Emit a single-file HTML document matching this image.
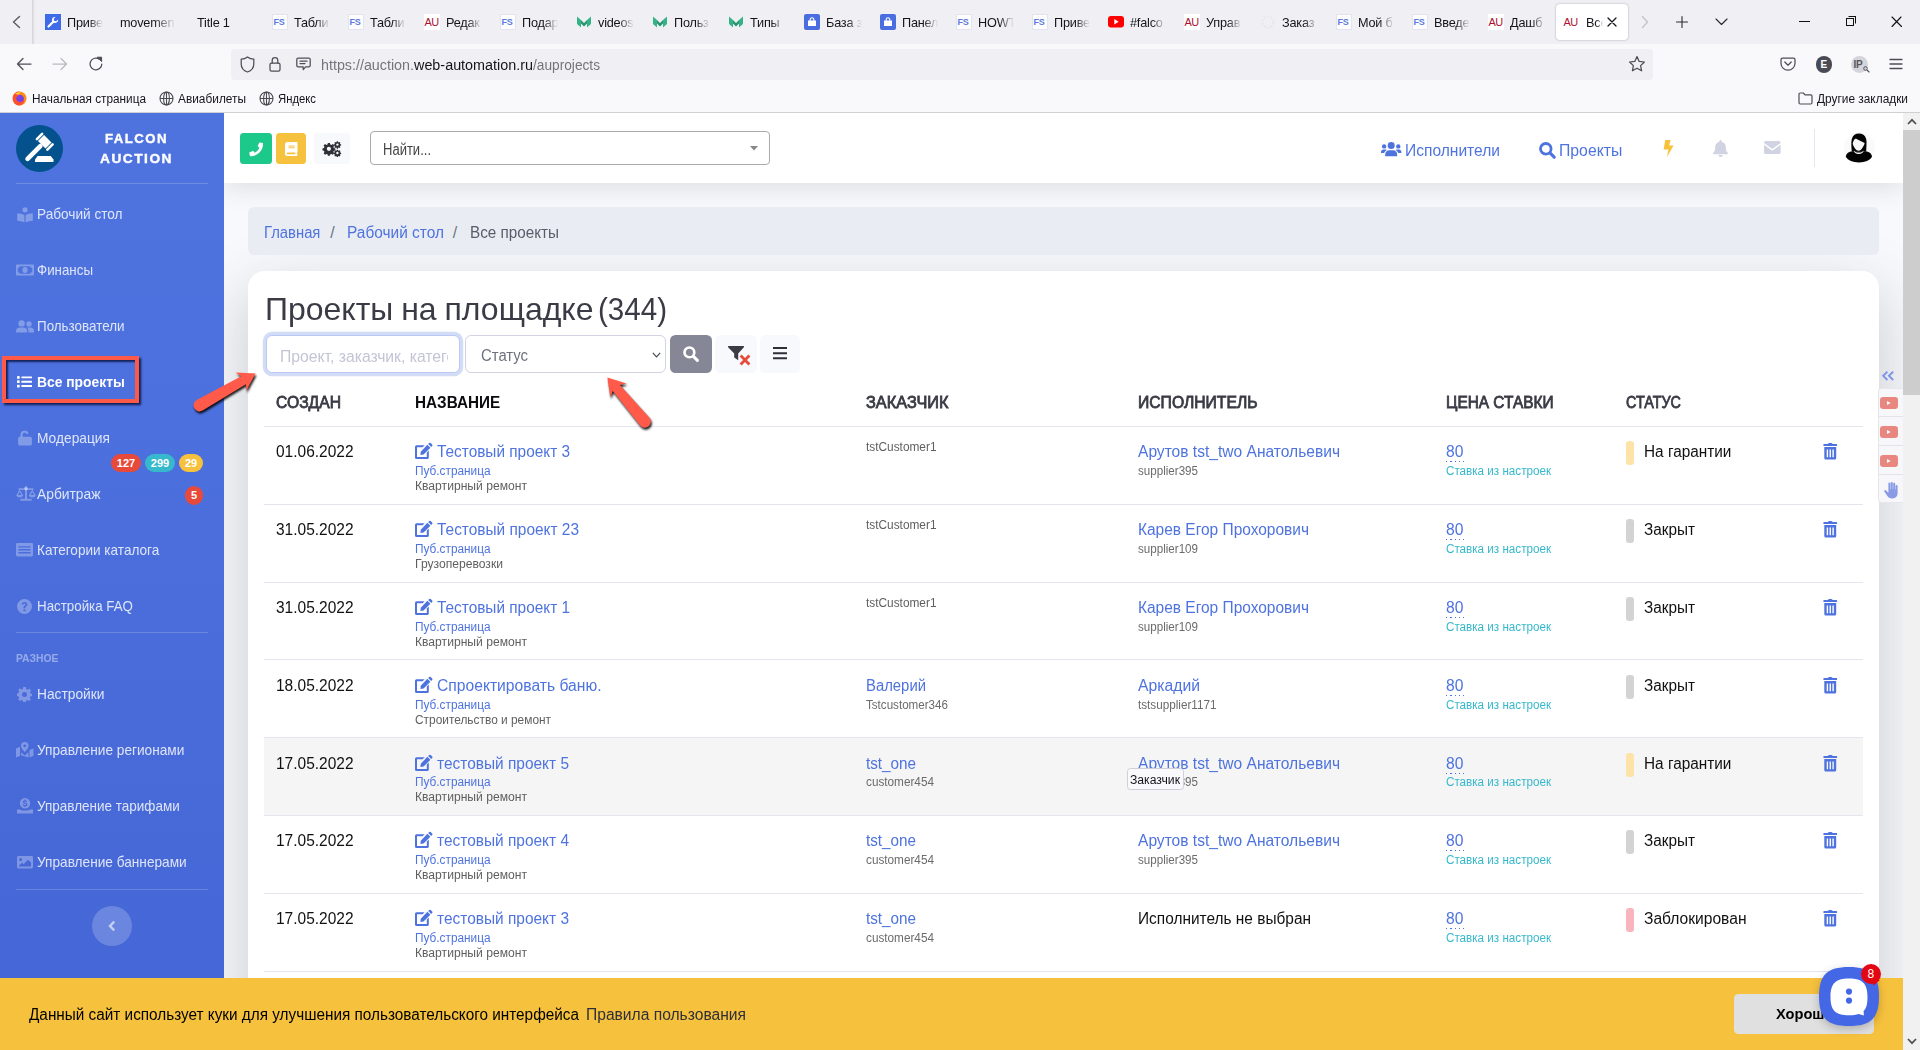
<!DOCTYPE html>
<html lang="ru"><head><meta charset="utf-8"><title>Все проекты</title>
<style>
html,body{margin:0;padding:0}
body{width:1920px;height:1050px;overflow:hidden;position:relative;background:#f8f9fc;font-family:"Liberation Sans",sans-serif;}
.t{position:absolute;white-space:nowrap;transform-origin:0 50%;}
.sb{-webkit-text-stroke:.8px currentColor}
.b{position:absolute;box-sizing:border-box;}
svg{position:absolute;overflow:visible}
.fade{-webkit-mask-image:linear-gradient(to right,#000 60%,transparent 100%);mask-image:linear-gradient(to right,#000 60%,transparent 100%);overflow:hidden}
</style></head><body>
<div class="b" style="left:224px;top:113px;width:1679px;height:937px;background:#f8f9fc;"></div>
<div class="b" style="left:224px;top:183px;width:1679px;height:867px;overflow:hidden;"><div class="b" style="left:0;top:-70px;width:1679px;height:70px;box-shadow:0 2.4px 28px 0 rgba(58,59,69,.16);"></div><div class="b" style="left:24px;top:88px;width:1631px;height:900px;border-radius:17px;box-shadow:0 22px 60px 4px rgba(58,59,69,.22);"></div></div>
<div class="b" style="left:248px;top:207px;width:1631px;height:48px;background:#eaecf4;border-radius:6px;"></div>
<span id="t1" class="t " style="left:264.3px;top:221.9px;font-size:16px;line-height:21px;color:#4e73df;transform:scaleX(0.9260);">Главная</span>
<span id="t2" class="t " style="left:330.2px;top:221.9px;font-size:16px;line-height:21px;color:#6c757d;">/</span>
<span id="t3" class="t " style="left:347.2px;top:221.9px;font-size:16px;line-height:21px;color:#4e73df;transform:scaleX(0.9658);">Рабочий стол</span>
<span id="t4" class="t " style="left:452.8px;top:221.9px;font-size:16px;line-height:21px;color:#6c757d;">/</span>
<span id="t5" class="t " style="left:470px;top:221.9px;font-size:16px;line-height:21px;color:#5a5c69;transform:scaleX(0.9530);">Все проекты</span>
<div class="b" style="left:248px;top:271px;width:1631px;height:800px;background:#fff;border-radius:17px;"></div>
<span id="t6" class="t " style="left:264.5px;top:288px;font-size:32px;line-height:42px;color:#3a3b45;transform:scaleX(0.9992);word-spacing:-1px;">Проекты на площадке</span>
<span id="t7" class="t " style="left:598px;top:288px;font-size:32px;line-height:42px;color:#3a3b45;transform:scaleX(0.9237);">(344)</span>
<div class="b" style="left:266px;top:334.8px;width:193.5px;height:37.8px;background:#fff;border:1px solid #bac8f3;border-radius:6px;box-shadow:0 0 0 3.2px rgba(78,115,223,.25);"></div>
<span class="t" style="left:279.6px;top:345.8px;width:168.4px;overflow:hidden;font-size:16px;line-height:21px;color:#c3c5d6;transform:none"><span id="ph" style="display:inline-block;transform-origin:0 50%;transform:scaleX(0.982)">Проект, заказчик, категория</span></span>
<div class="b" style="left:464.5px;top:334.8px;width:201px;height:37.8px;background:#fff;border:1px solid #d1d3e2;border-radius:6px;"></div>
<span id="t8" class="t " style="left:481.3px;top:344.9px;font-size:16px;line-height:21px;color:#6e707e;transform:scaleX(0.9293);">Статус</span>
<svg style="left:651.6px;top:351.6px;" width="9" height="6" viewBox="0 0 9 6"><path d="M0.8 0.8 L4.5 4.8 L8.2 0.8" fill="none" stroke="#4a4b57" stroke-width="1.25"/></svg>
<div class="b" style="left:670px;top:334.9px;width:42px;height:37.8px;background:#858796;border-radius:5.5px;"></div>
<svg style="left:683px;top:345.6px;" width="16" height="16" viewBox="0 0 16 16"><circle cx="6.4" cy="6.4" r="4.9" fill="none" stroke="#fff" stroke-width="2.6"/><path d="M10.4 10.4 L14.4 14.4" stroke="#fff" stroke-width="3" stroke-linecap="round"/></svg>
<div class="b" style="left:715px;top:334.9px;width:42px;height:37.8px;background:#f8f9fc;border-radius:5.5px;"></div>
<svg style="left:727.5px;top:345.6px;" width="24" height="20" viewBox="0 0 24 20"><path d="M0.6 0 H15.4 A0.7 0.7 0 0 1 15.9 1.2 L10.2 7.6 V14.2 L6.2 11.4 V7.6 L0.1 1.2 A0.7 0.7 0 0 1 0.6 0 Z" fill="#3a3b45"/><path d="M12.6 9.6 L21.4 18.4 M21.4 9.6 L12.6 18.4" stroke="#e74a3b" stroke-width="2.8"/></svg>
<div class="b" style="left:760px;top:334.9px;width:40px;height:37.8px;background:#f8f9fc;border-radius:5.5px;"></div>
<svg style="left:773px;top:347.3px;" width="14" height="12.4" viewBox="0 0 14 12.4"><path d="M0 1.1 H14 M0 6.2 H14 M0 11.3 H14" stroke="#2e2f37" stroke-width="2"/></svg>
<span id="t9" class="t sb" style="left:276px;top:392.1px;font-size:16px;line-height:21px;color:#3a3b45;transform:scaleX(0.9793);">СОЗДАН</span>
<span id="t10" class="t " style="left:415.2px;top:392.1px;font-size:16px;line-height:21px;color:#0c0c10;font-weight:700;transform:scaleX(0.9555);">НАЗВАНИЕ</span>
<span id="t11" class="t sb" style="left:866px;top:392.1px;font-size:16px;line-height:21px;color:#3a3b45;transform:scaleX(1.0191);">ЗАКАЗЧИК</span>
<span id="t12" class="t sb" style="left:1138px;top:392.1px;font-size:16px;line-height:21px;color:#3a3b45;transform:scaleX(0.9809);">ИСПОЛНИТЕЛЬ</span>
<span id="t13" class="t sb" style="left:1446.3px;top:392.1px;font-size:16px;line-height:21px;color:#3a3b45;transform:scaleX(0.9632);">ЦЕНА СТАВКИ</span>
<span id="t14" class="t sb" style="left:1626px;top:392.1px;font-size:16px;line-height:21px;color:#3a3b45;transform:scaleX(0.8989);">СТАТУС</span>
<div class="b" style="left:264px;top:425.6px;width:1599px;height:1.6px;background:#e3e6f0;"></div>
<div class="b" style="left:264px;top:504px;width:1599px;height:1px;background:#e3e6f0;"></div>
<span id="t15" class="t " style="left:276px;top:441px;font-size:16px;line-height:21px;color:#111;transform:scaleX(0.9678);">01.06.2022</span>
<svg style="left:415px;top:443.1px;" width="18" height="16" viewBox="0 0 18 16"><g fill="#4e73df"><path fill-rule="evenodd" d="M1.6 2.2 H9.6 L7.6 4.2 H2 V14 H11.8 V9.6 L13.8 7.6 V14.4 A1.6 1.6 0 0 1 12.2 16 H1.6 A1.6 1.6 0 0 1 0 14.4 V3.8 A1.6 1.6 0 0 1 1.6 2.2 Z"/><path d="M12.4 1.8 L15.4 4.8 L8.6 11.6 L5.4 12 L5.8 8.8 Z"/><path d="M13.2 1 L14.2 0 A1 1 0 0 1 15.6 0 L17.2 1.6 A1 1 0 0 1 17.2 3 L16.2 4 Z"/></g></svg>
<span id="t16" class="t " style="left:437px;top:441px;font-size:16px;line-height:21px;color:#4e73df;transform:scaleX(0.9608);">Тестовый проект 3</span>
<span id="t17" class="t " style="left:415.3px;top:462.9px;font-size:12px;line-height:16px;color:#4e73df;transform:scaleX(0.9845);">Пуб.страница</span>
<span id="t18" class="t " style="left:415.3px;top:478.3px;font-size:12px;line-height:16px;color:#5f5f5f;transform:scaleX(1.0101);">Квартирный ремонт</span>
<span id="t19" class="t " style="left:866px;top:439.3px;font-size:12px;line-height:16px;color:#5f5f5f;transform:scaleX(0.9880);">tstCustomer1</span>
<span id="t20" class="t " style="left:1138px;top:441px;font-size:16px;line-height:21px;color:#4e73df;transform:scaleX(0.9730);">Арутов tst_two Анатольевич</span>
<span id="t21" class="t " style="left:1138px;top:462.9px;font-size:12px;line-height:16px;color:#6b6b6b;transform:scaleX(0.9670);">supplier395</span>
<span id="t22" class="t " style="left:1446.3px;top:441px;font-size:16px;line-height:21px;color:#4e73df;transform:scaleX(0.9777);">80</span>
<div class="b" style="left:1446.3px;top:461.1px;width:18.2px;height:1.2px;background:repeating-linear-gradient(90deg,#4e73df 0 1.4px,transparent 1.4px 4.3px);"></div>
<span id="t23" class="t " style="left:1446.3px;top:462.9px;font-size:12px;line-height:16px;color:#36b9cc;transform:scaleX(0.9703);">Ставка из настроек</span>
<div class="b" style="left:1626px;top:441.3px;width:8.2px;height:23.6px;background:#fde3a7;border-radius:3px;"></div>
<span id="t24" class="t " style="left:1644px;top:441px;font-size:16px;line-height:21px;color:#111;transform:scaleX(0.9591);">На гарантии</span>
<svg style="left:1822.8px;top:442.7px;" width="14.5" height="16.5" viewBox="0 0 14.5 16.5"><g fill="#4e73df"><path d="M5.2 0.6 A1 1 0 0 1 6.1 0 H8.4 A1 1 0 0 1 9.3 0.6 L9.6 1.1 H13.6 A0.5 0.5 0 0 1 14.1 1.6 V2.6 A0.5 0.5 0 0 1 13.6 3.1 H0.9 A0.5 0.5 0 0 1 0.4 2.6 V1.6 A0.5 0.5 0 0 1 0.9 1.1 H4.9 Z"/><path fill-rule="evenodd" d="M1.3 4.1 H13.2 V15 A1.5 1.5 0 0 1 11.7 16.5 H2.8 A1.5 1.5 0 0 1 1.3 15 Z M3.7 6.4 V14.2 H5.1 V6.4 Z M6.55 6.4 V14.2 H7.95 V6.4 Z M9.4 6.4 V14.2 H10.8 V6.4 Z"/></g></svg>
<div class="b" style="left:264px;top:582px;width:1599px;height:1px;background:#e3e6f0;"></div>
<span id="t25" class="t " style="left:276px;top:519px;font-size:16px;line-height:21px;color:#111;transform:scaleX(0.9678);">31.05.2022</span>
<svg style="left:415px;top:521.1px;" width="18" height="16" viewBox="0 0 18 16"><g fill="#4e73df"><path fill-rule="evenodd" d="M1.6 2.2 H9.6 L7.6 4.2 H2 V14 H11.8 V9.6 L13.8 7.6 V14.4 A1.6 1.6 0 0 1 12.2 16 H1.6 A1.6 1.6 0 0 1 0 14.4 V3.8 A1.6 1.6 0 0 1 1.6 2.2 Z"/><path d="M12.4 1.8 L15.4 4.8 L8.6 11.6 L5.4 12 L5.8 8.8 Z"/><path d="M13.2 1 L14.2 0 A1 1 0 0 1 15.6 0 L17.2 1.6 A1 1 0 0 1 17.2 3 L16.2 4 Z"/></g></svg>
<span id="t26" class="t " style="left:437px;top:519px;font-size:16px;line-height:21px;color:#4e73df;transform:scaleX(0.9639);">Тестовый проект 23</span>
<span id="t27" class="t " style="left:415.3px;top:540.9px;font-size:12px;line-height:16px;color:#4e73df;transform:scaleX(0.9845);">Пуб.страница</span>
<span id="t28" class="t " style="left:415.3px;top:556.3px;font-size:12px;line-height:16px;color:#5f5f5f;transform:scaleX(1.0095);">Грузоперевозки</span>
<span id="t29" class="t " style="left:866px;top:517.3px;font-size:12px;line-height:16px;color:#5f5f5f;transform:scaleX(0.9880);">tstCustomer1</span>
<span id="t30" class="t " style="left:1138px;top:519px;font-size:16px;line-height:21px;color:#4e73df;transform:scaleX(0.9674);">Карев Егор Прохорович</span>
<span id="t31" class="t " style="left:1138px;top:540.9px;font-size:12px;line-height:16px;color:#6b6b6b;transform:scaleX(0.9670);">supplier109</span>
<span id="t32" class="t " style="left:1446.3px;top:519px;font-size:16px;line-height:21px;color:#4e73df;transform:scaleX(0.9777);">80</span>
<div class="b" style="left:1446.3px;top:539.1px;width:18.2px;height:1.2px;background:repeating-linear-gradient(90deg,#4e73df 0 1.4px,transparent 1.4px 4.3px);"></div>
<span id="t33" class="t " style="left:1446.3px;top:540.9px;font-size:12px;line-height:16px;color:#36b9cc;transform:scaleX(0.9703);">Ставка из настроек</span>
<div class="b" style="left:1626px;top:519.3px;width:8.2px;height:23.6px;background:#d3d3d3;border-radius:3px;"></div>
<span id="t34" class="t " style="left:1644px;top:519px;font-size:16px;line-height:21px;color:#111;transform:scaleX(0.9569);">Закрыт</span>
<svg style="left:1822.8px;top:520.7px;" width="14.5" height="16.5" viewBox="0 0 14.5 16.5"><g fill="#4e73df"><path d="M5.2 0.6 A1 1 0 0 1 6.1 0 H8.4 A1 1 0 0 1 9.3 0.6 L9.6 1.1 H13.6 A0.5 0.5 0 0 1 14.1 1.6 V2.6 A0.5 0.5 0 0 1 13.6 3.1 H0.9 A0.5 0.5 0 0 1 0.4 2.6 V1.6 A0.5 0.5 0 0 1 0.9 1.1 H4.9 Z"/><path fill-rule="evenodd" d="M1.3 4.1 H13.2 V15 A1.5 1.5 0 0 1 11.7 16.5 H2.8 A1.5 1.5 0 0 1 1.3 15 Z M3.7 6.4 V14.2 H5.1 V6.4 Z M6.55 6.4 V14.2 H7.95 V6.4 Z M9.4 6.4 V14.2 H10.8 V6.4 Z"/></g></svg>
<div class="b" style="left:264px;top:659px;width:1599px;height:1px;background:#e3e6f0;"></div>
<span id="t35" class="t " style="left:276px;top:597px;font-size:16px;line-height:21px;color:#111;transform:scaleX(0.9678);">31.05.2022</span>
<svg style="left:415px;top:599.1px;" width="18" height="16" viewBox="0 0 18 16"><g fill="#4e73df"><path fill-rule="evenodd" d="M1.6 2.2 H9.6 L7.6 4.2 H2 V14 H11.8 V9.6 L13.8 7.6 V14.4 A1.6 1.6 0 0 1 12.2 16 H1.6 A1.6 1.6 0 0 1 0 14.4 V3.8 A1.6 1.6 0 0 1 1.6 2.2 Z"/><path d="M12.4 1.8 L15.4 4.8 L8.6 11.6 L5.4 12 L5.8 8.8 Z"/><path d="M13.2 1 L14.2 0 A1 1 0 0 1 15.6 0 L17.2 1.6 A1 1 0 0 1 17.2 3 L16.2 4 Z"/></g></svg>
<span id="t36" class="t " style="left:437px;top:597px;font-size:16px;line-height:21px;color:#4e73df;transform:scaleX(0.9608);">Тестовый проект 1</span>
<span id="t37" class="t " style="left:415.3px;top:618.9px;font-size:12px;line-height:16px;color:#4e73df;transform:scaleX(0.9845);">Пуб.страница</span>
<span id="t38" class="t " style="left:415.3px;top:634.3px;font-size:12px;line-height:16px;color:#5f5f5f;transform:scaleX(1.0101);">Квартирный ремонт</span>
<span id="t39" class="t " style="left:866px;top:595.3px;font-size:12px;line-height:16px;color:#5f5f5f;transform:scaleX(0.9880);">tstCustomer1</span>
<span id="t40" class="t " style="left:1138px;top:597px;font-size:16px;line-height:21px;color:#4e73df;transform:scaleX(0.9674);">Карев Егор Прохорович</span>
<span id="t41" class="t " style="left:1138px;top:618.9px;font-size:12px;line-height:16px;color:#6b6b6b;transform:scaleX(0.9670);">supplier109</span>
<span id="t42" class="t " style="left:1446.3px;top:597px;font-size:16px;line-height:21px;color:#4e73df;transform:scaleX(0.9777);">80</span>
<div class="b" style="left:1446.3px;top:617.1px;width:18.2px;height:1.2px;background:repeating-linear-gradient(90deg,#4e73df 0 1.4px,transparent 1.4px 4.3px);"></div>
<span id="t43" class="t " style="left:1446.3px;top:618.9px;font-size:12px;line-height:16px;color:#36b9cc;transform:scaleX(0.9703);">Ставка из настроек</span>
<div class="b" style="left:1626px;top:597.3px;width:8.2px;height:23.6px;background:#d3d3d3;border-radius:3px;"></div>
<span id="t44" class="t " style="left:1644px;top:597px;font-size:16px;line-height:21px;color:#111;transform:scaleX(0.9569);">Закрыт</span>
<svg style="left:1822.8px;top:598.7px;" width="14.5" height="16.5" viewBox="0 0 14.5 16.5"><g fill="#4e73df"><path d="M5.2 0.6 A1 1 0 0 1 6.1 0 H8.4 A1 1 0 0 1 9.3 0.6 L9.6 1.1 H13.6 A0.5 0.5 0 0 1 14.1 1.6 V2.6 A0.5 0.5 0 0 1 13.6 3.1 H0.9 A0.5 0.5 0 0 1 0.4 2.6 V1.6 A0.5 0.5 0 0 1 0.9 1.1 H4.9 Z"/><path fill-rule="evenodd" d="M1.3 4.1 H13.2 V15 A1.5 1.5 0 0 1 11.7 16.5 H2.8 A1.5 1.5 0 0 1 1.3 15 Z M3.7 6.4 V14.2 H5.1 V6.4 Z M6.55 6.4 V14.2 H7.95 V6.4 Z M9.4 6.4 V14.2 H10.8 V6.4 Z"/></g></svg>
<div class="b" style="left:264px;top:737px;width:1599px;height:1px;background:#e3e6f0;"></div>
<span id="t45" class="t " style="left:276px;top:675px;font-size:16px;line-height:21px;color:#111;transform:scaleX(0.9678);">18.05.2022</span>
<svg style="left:415px;top:677.1px;" width="18" height="16" viewBox="0 0 18 16"><g fill="#4e73df"><path fill-rule="evenodd" d="M1.6 2.2 H9.6 L7.6 4.2 H2 V14 H11.8 V9.6 L13.8 7.6 V14.4 A1.6 1.6 0 0 1 12.2 16 H1.6 A1.6 1.6 0 0 1 0 14.4 V3.8 A1.6 1.6 0 0 1 1.6 2.2 Z"/><path d="M12.4 1.8 L15.4 4.8 L8.6 11.6 L5.4 12 L5.8 8.8 Z"/><path d="M13.2 1 L14.2 0 A1 1 0 0 1 15.6 0 L17.2 1.6 A1 1 0 0 1 17.2 3 L16.2 4 Z"/></g></svg>
<span id="t46" class="t " style="left:437px;top:675px;font-size:16px;line-height:21px;color:#4e73df;transform:scaleX(0.9785);">Спроектировать баню.</span>
<span id="t47" class="t " style="left:415.3px;top:696.9px;font-size:12px;line-height:16px;color:#4e73df;transform:scaleX(0.9845);">Пуб.страница</span>
<span id="t48" class="t " style="left:415.3px;top:712.3px;font-size:12px;line-height:16px;color:#5f5f5f;transform:scaleX(0.9907);">Строительство и ремонт</span>
<span id="t49" class="t " style="left:866px;top:675px;font-size:16px;line-height:21px;color:#4e73df;transform:scaleX(0.9291);">Валерий</span>
<span id="t50" class="t " style="left:866px;top:696.9px;font-size:12px;line-height:16px;color:#6b6b6b;transform:scaleX(0.9681);">Tstcustomer346</span>
<span id="t51" class="t " style="left:1138px;top:675px;font-size:16px;line-height:21px;color:#4e73df;transform:scaleX(0.9836);">Аркадий</span>
<span id="t52" class="t " style="left:1138px;top:696.9px;font-size:12px;line-height:16px;color:#6b6b6b;transform:scaleX(0.9752);">tstsupplier1171</span>
<span id="t53" class="t " style="left:1446.3px;top:675px;font-size:16px;line-height:21px;color:#4e73df;transform:scaleX(0.9777);">80</span>
<div class="b" style="left:1446.3px;top:695.1px;width:18.2px;height:1.2px;background:repeating-linear-gradient(90deg,#4e73df 0 1.4px,transparent 1.4px 4.3px);"></div>
<span id="t54" class="t " style="left:1446.3px;top:696.9px;font-size:12px;line-height:16px;color:#36b9cc;transform:scaleX(0.9703);">Ставка из настроек</span>
<div class="b" style="left:1626px;top:675.3px;width:8.2px;height:23.6px;background:#d3d3d3;border-radius:3px;"></div>
<span id="t55" class="t " style="left:1644px;top:675px;font-size:16px;line-height:21px;color:#111;transform:scaleX(0.9569);">Закрыт</span>
<svg style="left:1822.8px;top:676.7px;" width="14.5" height="16.5" viewBox="0 0 14.5 16.5"><g fill="#4e73df"><path d="M5.2 0.6 A1 1 0 0 1 6.1 0 H8.4 A1 1 0 0 1 9.3 0.6 L9.6 1.1 H13.6 A0.5 0.5 0 0 1 14.1 1.6 V2.6 A0.5 0.5 0 0 1 13.6 3.1 H0.9 A0.5 0.5 0 0 1 0.4 2.6 V1.6 A0.5 0.5 0 0 1 0.9 1.1 H4.9 Z"/><path fill-rule="evenodd" d="M1.3 4.1 H13.2 V15 A1.5 1.5 0 0 1 11.7 16.5 H2.8 A1.5 1.5 0 0 1 1.3 15 Z M3.7 6.4 V14.2 H5.1 V6.4 Z M6.55 6.4 V14.2 H7.95 V6.4 Z M9.4 6.4 V14.2 H10.8 V6.4 Z"/></g></svg>
<div class="b" style="left:264px;top:738px;width:1599px;height:77px;background:#f5f5f5;"></div>
<div class="b" style="left:264px;top:815px;width:1599px;height:1px;background:#e3e6f0;"></div>
<span id="t56" class="t " style="left:276px;top:753px;font-size:16px;line-height:21px;color:#111;transform:scaleX(0.9678);">17.05.2022</span>
<svg style="left:415px;top:755.1px;" width="18" height="16" viewBox="0 0 18 16"><g fill="#4e73df"><path fill-rule="evenodd" d="M1.6 2.2 H9.6 L7.6 4.2 H2 V14 H11.8 V9.6 L13.8 7.6 V14.4 A1.6 1.6 0 0 1 12.2 16 H1.6 A1.6 1.6 0 0 1 0 14.4 V3.8 A1.6 1.6 0 0 1 1.6 2.2 Z"/><path d="M12.4 1.8 L15.4 4.8 L8.6 11.6 L5.4 12 L5.8 8.8 Z"/><path d="M13.2 1 L14.2 0 A1 1 0 0 1 15.6 0 L17.2 1.6 A1 1 0 0 1 17.2 3 L16.2 4 Z"/></g></svg>
<span id="t57" class="t " style="left:437px;top:753px;font-size:16px;line-height:21px;color:#4e73df;transform:scaleX(0.9657);">тестовый проект 5</span>
<span id="t58" class="t " style="left:415.3px;top:774px;font-size:12px;line-height:16px;color:#4e73df;transform:scaleX(0.9845);">Пуб.страница</span>
<span id="t59" class="t " style="left:415.3px;top:789.4px;font-size:12px;line-height:16px;color:#5f5f5f;transform:scaleX(1.0101);">Квартирный ремонт</span>
<span id="t60" class="t " style="left:866px;top:753px;font-size:16px;line-height:21px;color:#4e73df;transform:scaleX(0.9527);">tst_one</span>
<span id="t61" class="t " style="left:866px;top:774px;font-size:12px;line-height:16px;color:#6b6b6b;transform:scaleX(0.9802);">customer454</span>
<span id="t62" class="t " style="left:1138px;top:753px;font-size:16px;line-height:21px;color:#4e73df;transform:scaleX(0.9730);">Арутов tst_two Анатольевич</span>
<span id="t63" class="t " style="left:1138px;top:774px;font-size:12px;line-height:16px;color:#6b6b6b;transform:scaleX(0.9670);">supplier395</span>
<span id="t64" class="t " style="left:1446.3px;top:753px;font-size:16px;line-height:21px;color:#4e73df;transform:scaleX(0.9777);">80</span>
<div class="b" style="left:1446.3px;top:773.1px;width:18.2px;height:1.2px;background:repeating-linear-gradient(90deg,#4e73df 0 1.4px,transparent 1.4px 4.3px);"></div>
<span id="t65" class="t " style="left:1446.3px;top:774px;font-size:12px;line-height:16px;color:#36b9cc;transform:scaleX(0.9703);">Ставка из настроек</span>
<div class="b" style="left:1626px;top:753.3px;width:8.2px;height:23.6px;background:#fde3a7;border-radius:3px;"></div>
<span id="t66" class="t " style="left:1644px;top:753px;font-size:16px;line-height:21px;color:#111;transform:scaleX(0.9591);">На гарантии</span>
<svg style="left:1822.8px;top:754.7px;" width="14.5" height="16.5" viewBox="0 0 14.5 16.5"><g fill="#4e73df"><path d="M5.2 0.6 A1 1 0 0 1 6.1 0 H8.4 A1 1 0 0 1 9.3 0.6 L9.6 1.1 H13.6 A0.5 0.5 0 0 1 14.1 1.6 V2.6 A0.5 0.5 0 0 1 13.6 3.1 H0.9 A0.5 0.5 0 0 1 0.4 2.6 V1.6 A0.5 0.5 0 0 1 0.9 1.1 H4.9 Z"/><path fill-rule="evenodd" d="M1.3 4.1 H13.2 V15 A1.5 1.5 0 0 1 11.7 16.5 H2.8 A1.5 1.5 0 0 1 1.3 15 Z M3.7 6.4 V14.2 H5.1 V6.4 Z M6.55 6.4 V14.2 H7.95 V6.4 Z M9.4 6.4 V14.2 H10.8 V6.4 Z"/></g></svg>
<div class="b" style="left:264px;top:893px;width:1599px;height:1px;background:#e3e6f0;"></div>
<span id="t67" class="t " style="left:276px;top:830px;font-size:16px;line-height:21px;color:#111;transform:scaleX(0.9678);">17.05.2022</span>
<svg style="left:415px;top:832.1px;" width="18" height="16" viewBox="0 0 18 16"><g fill="#4e73df"><path fill-rule="evenodd" d="M1.6 2.2 H9.6 L7.6 4.2 H2 V14 H11.8 V9.6 L13.8 7.6 V14.4 A1.6 1.6 0 0 1 12.2 16 H1.6 A1.6 1.6 0 0 1 0 14.4 V3.8 A1.6 1.6 0 0 1 1.6 2.2 Z"/><path d="M12.4 1.8 L15.4 4.8 L8.6 11.6 L5.4 12 L5.8 8.8 Z"/><path d="M13.2 1 L14.2 0 A1 1 0 0 1 15.6 0 L17.2 1.6 A1 1 0 0 1 17.2 3 L16.2 4 Z"/></g></svg>
<span id="t68" class="t " style="left:437px;top:830px;font-size:16px;line-height:21px;color:#4e73df;transform:scaleX(0.9657);">тестовый проект 4</span>
<span id="t69" class="t " style="left:415.3px;top:851.9px;font-size:12px;line-height:16px;color:#4e73df;transform:scaleX(0.9845);">Пуб.страница</span>
<span id="t70" class="t " style="left:415.3px;top:867.3px;font-size:12px;line-height:16px;color:#5f5f5f;transform:scaleX(1.0101);">Квартирный ремонт</span>
<span id="t71" class="t " style="left:866px;top:830px;font-size:16px;line-height:21px;color:#4e73df;transform:scaleX(0.9527);">tst_one</span>
<span id="t72" class="t " style="left:866px;top:851.9px;font-size:12px;line-height:16px;color:#6b6b6b;transform:scaleX(0.9802);">customer454</span>
<span id="t73" class="t " style="left:1138px;top:830px;font-size:16px;line-height:21px;color:#4e73df;transform:scaleX(0.9730);">Арутов tst_two Анатольевич</span>
<span id="t74" class="t " style="left:1138px;top:851.9px;font-size:12px;line-height:16px;color:#6b6b6b;transform:scaleX(0.9670);">supplier395</span>
<span id="t75" class="t " style="left:1446.3px;top:830px;font-size:16px;line-height:21px;color:#4e73df;transform:scaleX(0.9777);">80</span>
<div class="b" style="left:1446.3px;top:850.1px;width:18.2px;height:1.2px;background:repeating-linear-gradient(90deg,#4e73df 0 1.4px,transparent 1.4px 4.3px);"></div>
<span id="t76" class="t " style="left:1446.3px;top:851.9px;font-size:12px;line-height:16px;color:#36b9cc;transform:scaleX(0.9703);">Ставка из настроек</span>
<div class="b" style="left:1626px;top:830.3px;width:8.2px;height:23.6px;background:#d3d3d3;border-radius:3px;"></div>
<span id="t77" class="t " style="left:1644px;top:830px;font-size:16px;line-height:21px;color:#111;transform:scaleX(0.9569);">Закрыт</span>
<svg style="left:1822.8px;top:831.7px;" width="14.5" height="16.5" viewBox="0 0 14.5 16.5"><g fill="#4e73df"><path d="M5.2 0.6 A1 1 0 0 1 6.1 0 H8.4 A1 1 0 0 1 9.3 0.6 L9.6 1.1 H13.6 A0.5 0.5 0 0 1 14.1 1.6 V2.6 A0.5 0.5 0 0 1 13.6 3.1 H0.9 A0.5 0.5 0 0 1 0.4 2.6 V1.6 A0.5 0.5 0 0 1 0.9 1.1 H4.9 Z"/><path fill-rule="evenodd" d="M1.3 4.1 H13.2 V15 A1.5 1.5 0 0 1 11.7 16.5 H2.8 A1.5 1.5 0 0 1 1.3 15 Z M3.7 6.4 V14.2 H5.1 V6.4 Z M6.55 6.4 V14.2 H7.95 V6.4 Z M9.4 6.4 V14.2 H10.8 V6.4 Z"/></g></svg>
<div class="b" style="left:264px;top:971px;width:1599px;height:1px;background:#e3e6f0;"></div>
<span id="t78" class="t " style="left:276px;top:908px;font-size:16px;line-height:21px;color:#111;transform:scaleX(0.9678);">17.05.2022</span>
<svg style="left:415px;top:910.1px;" width="18" height="16" viewBox="0 0 18 16"><g fill="#4e73df"><path fill-rule="evenodd" d="M1.6 2.2 H9.6 L7.6 4.2 H2 V14 H11.8 V9.6 L13.8 7.6 V14.4 A1.6 1.6 0 0 1 12.2 16 H1.6 A1.6 1.6 0 0 1 0 14.4 V3.8 A1.6 1.6 0 0 1 1.6 2.2 Z"/><path d="M12.4 1.8 L15.4 4.8 L8.6 11.6 L5.4 12 L5.8 8.8 Z"/><path d="M13.2 1 L14.2 0 A1 1 0 0 1 15.6 0 L17.2 1.6 A1 1 0 0 1 17.2 3 L16.2 4 Z"/></g></svg>
<span id="t79" class="t " style="left:437px;top:908px;font-size:16px;line-height:21px;color:#4e73df;transform:scaleX(0.9657);">тестовый проект 3</span>
<span id="t80" class="t " style="left:415.3px;top:929.9px;font-size:12px;line-height:16px;color:#4e73df;transform:scaleX(0.9845);">Пуб.страница</span>
<span id="t81" class="t " style="left:415.3px;top:945.3px;font-size:12px;line-height:16px;color:#5f5f5f;transform:scaleX(1.0101);">Квартирный ремонт</span>
<span id="t82" class="t " style="left:866px;top:908px;font-size:16px;line-height:21px;color:#4e73df;transform:scaleX(0.9527);">tst_one</span>
<span id="t83" class="t " style="left:866px;top:929.9px;font-size:12px;line-height:16px;color:#6b6b6b;transform:scaleX(0.9802);">customer454</span>
<span id="t84" class="t " style="left:1138px;top:908px;font-size:16px;line-height:21px;color:#111;transform:scaleX(0.9641);">Исполнитель не выбран</span>
<span id="t85" class="t " style="left:1446.3px;top:908px;font-size:16px;line-height:21px;color:#4e73df;transform:scaleX(0.9777);">80</span>
<div class="b" style="left:1446.3px;top:928.1px;width:18.2px;height:1.2px;background:repeating-linear-gradient(90deg,#4e73df 0 1.4px,transparent 1.4px 4.3px);"></div>
<span id="t86" class="t " style="left:1446.3px;top:929.9px;font-size:12px;line-height:16px;color:#36b9cc;transform:scaleX(0.9703);">Ставка из настроек</span>
<div class="b" style="left:1626px;top:908.3px;width:8.2px;height:23.6px;background:#f9b4be;border-radius:3px;"></div>
<span id="t87" class="t " style="left:1644px;top:908px;font-size:16px;line-height:21px;color:#111;transform:scaleX(0.9742);">Заблокирован</span>
<svg style="left:1822.8px;top:909.7px;" width="14.5" height="16.5" viewBox="0 0 14.5 16.5"><g fill="#4e73df"><path d="M5.2 0.6 A1 1 0 0 1 6.1 0 H8.4 A1 1 0 0 1 9.3 0.6 L9.6 1.1 H13.6 A0.5 0.5 0 0 1 14.1 1.6 V2.6 A0.5 0.5 0 0 1 13.6 3.1 H0.9 A0.5 0.5 0 0 1 0.4 2.6 V1.6 A0.5 0.5 0 0 1 0.9 1.1 H4.9 Z"/><path fill-rule="evenodd" d="M1.3 4.1 H13.2 V15 A1.5 1.5 0 0 1 11.7 16.5 H2.8 A1.5 1.5 0 0 1 1.3 15 Z M3.7 6.4 V14.2 H5.1 V6.4 Z M6.55 6.4 V14.2 H7.95 V6.4 Z M9.4 6.4 V14.2 H10.8 V6.4 Z"/></g></svg>
<div class="b" style="left:224px;top:113px;width:1679px;height:70px;background:#fff;"></div>
<div class="b" style="left:240px;top:133px;width:32px;height:31px;background:#1cc88a;border-radius:3.5px;"></div>
<svg style="left:249.2px;top:141.6px;" width="14.2" height="14.4" viewBox="0 0 14 14"><path transform="translate(14 0) scale(-1 1)" d="M13.3 10 L10.4 8.7 A0.7 0.7 0 0 0 9.6 8.9 L8.4 10.4 A10 10 0 0 1 3.6 5.6 L5.1 4.4 A0.7 0.7 0 0 0 5.3 3.6 L4 0.7 A0.7 0.7 0 0 0 3.2 0.3 L0.6 0.9 A0.7 0.7 0 0 0 0.1 1.6 C0.1 8.4 5.6 13.9 12.4 13.9 A0.7 0.7 0 0 0 13.1 13.4 L13.7 10.8 A0.7 0.7 0 0 0 13.3 10 Z" fill="#fff"/></svg>
<div class="b" style="left:276px;top:133px;width:30px;height:31px;background:#f6c23e;border-radius:3.5px;"></div>
<svg style="left:285px;top:141.5px;" width="12.5" height="14" viewBox="0 0 12.5 14"><path fill-rule="evenodd" d="M12.5 9.8 V0.7 A0.66 0.66 0 0 0 11.84 0 H2.6 A2.6 2.6 0 0 0 0 2.6 V11.4 A2.6 2.6 0 0 0 2.6 14 H11.84 A0.66 0.66 0 0 0 12.5 13.3 V12.9 A0.66 0.66 0 0 0 12.2 12.4 C12.1 12 12.1 10.8 12.2 10.4 A0.66 0.66 0 0 0 12.5 9.8 Z M3.5 3.7 A0.17 0.17 0 0 1 3.67 3.5 H9.5 A0.17 0.17 0 0 1 9.67 3.7 V4.2 A0.17 0.17 0 0 1 9.5 4.4 H3.67 A0.17 0.17 0 0 1 3.5 4.2 Z M3.5 5.5 A0.17 0.17 0 0 1 3.67 5.3 H9.5 A0.17 0.17 0 0 1 9.67 5.5 V6 A0.17 0.17 0 0 1 9.5 6.2 H3.67 A0.17 0.17 0 0 1 3.5 6 Z M10.4 12.25 H2.6 A0.87 0.87 0 0 1 2.6 10.5 H10.4 C10.35 11 10.35 11.8 10.4 12.25 Z" fill="#fff"/></svg>
<div class="b" style="left:314px;top:133px;width:36px;height:31px;background:#f8f9fc;border-radius:3.5px;"></div>
<svg style="left:322px;top:141px;" width="20" height="16" viewBox="0 0 20 16"><g fill="#2e2f37" fill-rule="evenodd"><g transform="translate(6.9 7.8) scale(1.04) translate(-6 -6)"><path d="M6 6 m-1 -5.6 h2 l0.35 1.45 l1.05 0.45 l1.3 -0.8 l1.4 1.4 l-0.8 1.3 l0.45 1.05 l1.45 0.35 v2 l-1.45 0.35 l-0.45 1.05 l0.8 1.3 l-1.4 1.4 l-1.3 -0.8 l-1.05 0.45 l-0.35 1.45 h-2 l-0.35 -1.45 l-1.05 -0.45 l-1.3 0.8 l-1.4 -1.4 l0.8 -1.3 l-0.45 -1.05 l-1.45 -0.35 v-2 l1.45 -0.35 l0.45 -1.05 l-0.8 -1.3 l1.4 -1.4 l1.3 0.8 l1.05 -0.45 Z m1 3.6 a2 2 0 1 0 0 4 a2 2 0 1 0 0 -4 Z"/></g><g transform="translate(15.4 3.6) scale(0.6) translate(-6 -6)"><path d="M6 6 m-1 -5.6 h2 l0.35 1.45 l1.05 0.45 l1.3 -0.8 l1.4 1.4 l-0.8 1.3 l0.45 1.05 l1.45 0.35 v2 l-1.45 0.35 l-0.45 1.05 l0.8 1.3 l-1.4 1.4 l-1.3 -0.8 l-1.05 0.45 l-0.35 1.45 h-2 l-0.35 -1.45 l-1.05 -0.45 l-1.3 0.8 l-1.4 -1.4 l0.8 -1.3 l-0.45 -1.05 l-1.45 -0.35 v-2 l1.45 -0.35 l0.45 -1.05 l-0.8 -1.3 l1.4 -1.4 l1.3 0.8 l1.05 -0.45 Z m1 3.6 a2 2 0 1 0 0 4 a2 2 0 1 0 0 -4 Z"/></g><g transform="translate(15.4 12) scale(0.6) translate(-6 -6)"><path d="M6 6 m-1 -5.6 h2 l0.35 1.45 l1.05 0.45 l1.3 -0.8 l1.4 1.4 l-0.8 1.3 l0.45 1.05 l1.45 0.35 v2 l-1.45 0.35 l-0.45 1.05 l0.8 1.3 l-1.4 1.4 l-1.3 -0.8 l-1.05 0.45 l-0.35 1.45 h-2 l-0.35 -1.45 l-1.05 -0.45 l-1.3 0.8 l-1.4 -1.4 l0.8 -1.3 l-0.45 -1.05 l-1.45 -0.35 v-2 l1.45 -0.35 l0.45 -1.05 l-0.8 -1.3 l1.4 -1.4 l1.3 0.8 l1.05 -0.45 Z m1 3.6 a2 2 0 1 0 0 4 a2 2 0 1 0 0 -4 Z"/></g></g></svg>
<div class="b" style="left:370px;top:131px;width:400px;height:34px;background:#fff;border:1px solid #aaa;border-radius:4px;"></div>
<span id="t88" class="t " style="left:383.3px;top:138.8px;font-size:16px;line-height:21px;color:#444;transform:scaleX(0.8136);">Найти...</span>
<svg style="left:750px;top:146.3px;" width="8" height="4.5" viewBox="0 0 8 4.5"><path d="M0 0 H8 L4 4.5 Z" fill="#888"/></svg>
<svg style="left:1381px;top:142.3px;" width="20.4" height="14.2" viewBox="0 0 20.4 14.2"><g fill="#4e73df"><circle cx="10.2" cy="3.6" r="3.5"/><path d="M4.2 14.2 V12.4 C4.2 10 6 8.2 8.4 8.2 H12 C14.4 8.2 16.2 10 16.2 12.4 V14.2 Z"/><circle cx="3.1" cy="4.4" r="2.2"/><circle cx="17.3" cy="4.4" r="2.2"/><path d="M0 11 V10.2 C0 8.8 1 7.6 2.4 7.6 H4.6 C5 7.6 5.6 7.8 5.8 8 C4.4 8.8 3.4 10 3.2 11 Z"/><path d="M20.4 11 V10.2 C20.4 8.8 19.4 7.6 18 7.6 H15.8 C15.4 7.6 14.8 7.8 14.6 8 C16 8.8 17 10 17.2 11 Z"/></g></svg>
<span id="t89" class="t " style="left:1405px;top:139.7px;font-size:16.4px;line-height:21px;color:#4e73df;transform:scaleX(0.9500);">Исполнители</span>
<svg style="left:1538.6px;top:141.6px;" width="17" height="17" viewBox="0 0 17 17"><circle cx="6.8" cy="6.8" r="5.3" fill="none" stroke="#4e73df" stroke-width="2.8"/><path d="M11.2 11.2 L15.2 15.2" stroke="#4e73df" stroke-width="3.2" stroke-linecap="round"/></svg>
<span id="t90" class="t " style="left:1559px;top:139.7px;font-size:16.4px;line-height:21px;color:#4e73df;transform:scaleX(0.9623);">Проекты</span>
<svg style="left:1662.6px;top:139.8px;" width="11" height="17" viewBox="0 0 11 17"><path d="M2.2 0 H7.6 L6.2 5.4 H10.6 L4 17 L5.4 9.4 H0.6 Z" fill="#f6c23e"/></svg>
<svg style="left:1712.6px;top:139.8px;" width="15" height="17" viewBox="0 0 15 17"><path d="M7.5 0 A1.1 1.1 0 0 1 8.6 1.1 V1.7 C11 2.2 12.8 4.3 12.8 6.9 C12.8 10.4 13.6 11.6 14.6 12.6 A1 1 0 0 1 13.9 14.3 H1.1 A1 1 0 0 1 0.4 12.6 C1.4 11.6 2.2 10.4 2.2 6.9 C2.2 4.3 4 2.2 6.4 1.7 V1.1 A1.1 1.1 0 0 1 7.5 0 Z M5.4 15 H9.6 A2.1 2.1 0 0 1 5.4 15 Z" fill="#d1d3e2"/></svg>
<svg style="left:1763.6px;top:141.4px;" width="16.6" height="13" viewBox="0 0 16.6 13"><path d="M1.6 0 H15 A1.6 1.6 0 0 1 16.6 1.6 V2 L8.9 7.6 A1 1 0 0 1 7.7 7.6 L0 2 V1.6 A1.6 1.6 0 0 1 1.6 0 Z M0 3.8 L7.2 9 A1.9 1.9 0 0 0 9.4 9 L16.6 3.8 V11.4 A1.6 1.6 0 0 1 15 13 H1.6 A1.6 1.6 0 0 1 0 11.4 Z" fill="#d1d3e2"/></svg>
<div class="b" style="left:1814px;top:129px;width:1px;height:38px;background:#e3e6f0;"></div>
<div class="b" style="left:1843.8px;top:131.7px;width:31px;height:31px;background:#fafafa;border-radius:50%;"></div>
<svg style="left:1843.3px;top:131.2px;" width="32" height="32" viewBox="0 0 32 32"><path d="M8.8 20.6 C8.3 14 8.1 10 9 7.5 C10 4 12.5 2.4 15.8 2.4 C19.5 2.4 22 4 23 7.5 C23.9 10 23.5 14 23.2 20.6 Z" fill="#030303"/><path d="M2.8 25.8 C3.2 22.4 6 20.6 9.4 20.3 H22.4 C25.8 20.6 28.6 22.4 29 25.8 C27 29.4 22 31.4 15.9 31.4 C9.8 31.4 4.8 29.4 2.8 25.8 Z" fill="#030303"/><path d="M11.9 7.9 C12.6 7.6 13.2 7.8 14 8.2 L21.6 11.9 C21.4 13.6 20.6 15 19.8 16.2 C18.8 18 17.4 19.6 15.6 19.8 C13.8 19.6 12.2 18 11.2 16.2 C10.4 14.8 9.8 13.6 9.7 12.4 C10.2 10.4 11 8.8 11.9 7.9 Z" fill="#f7f7f7"/><path d="M10.8 19.5 C12 21.3 13.8 21.6 15.7 21.6 C17.6 21.6 19.4 21.3 20.7 19.5 C20.4 21.7 18.6 23 15.7 23 C12.8 23 11 21.7 10.8 19.5 Z" fill="#f7f7f7"/></svg>
<div class="b" style="left:0px;top:113px;width:224px;height:937px;background:linear-gradient(180deg,#4e73df 10%,#4566d6 100%);"></div>
<div class="b" style="left:16px;top:125px;width:47px;height:47px;background:#03528d;border-radius:50%;"></div>
<svg style="left:16px;top:125px;" width="47" height="47" viewBox="0 0 47 47"><g fill="#fff"><g transform="translate(28.75 16.75) rotate(45)">
<rect x="-5.3" y="-4.3" width="10.6" height="8.6"/><rect x="-8.7" y="-5" width="2.6" height="10" rx="1.3"/><rect x="6.1" y="-5" width="2.6" height="10" rx="1.3"/>
<rect x="-2.3" y="4" width="4.6" height="22.6" rx="2.3"/></g>
<path d="M21.6 31.1 H34.8 L37.5 34.6 V36.4 A0.6 0.6 0 0 1 36.9 37 H19.6 A0.6 0.6 0 0 1 19 36.4 V34.6 Z"/></g></svg>
<span id="t91" class="t brand" style="left:104.5px;top:130.3px;font-size:13.6px;line-height:18px;color:#fff;font-weight:700;transform:scaleX(0.9709);letter-spacing:1.5px;-webkit-text-stroke:.4px #fff;">FALCON</span>
<span id="t92" class="t brand" style="left:100px;top:149.8px;font-size:13.6px;line-height:18px;color:#fff;font-weight:700;transform:scaleX(1.0078);letter-spacing:1.5px;-webkit-text-stroke:.4px #fff;">AUCTION</span>
<div class="b" style="left:16px;top:183px;width:192px;height:1px;background:rgba(255,255,255,.18);"></div>
<span id="t93" class="t " style="left:37.2px;top:204.8px;font-size:14.4px;line-height:19px;color:rgba(255,255,255,.82);transform:scaleX(0.9464);">Рабочий стол</span>
<span id="t94" class="t " style="left:37.2px;top:261px;font-size:14.4px;line-height:19px;color:rgba(255,255,255,.82);transform:scaleX(0.9268);">Финансы</span>
<span id="t95" class="t " style="left:37.2px;top:316.8px;font-size:14.4px;line-height:19px;color:rgba(255,255,255,.82);transform:scaleX(0.9315);">Пользователи</span>
<span id="t96" class="t " style="left:37.2px;top:428.8px;font-size:14.4px;line-height:19px;color:rgba(255,255,255,.82);transform:scaleX(0.9564);">Модерация</span>
<span id="t97" class="t " style="left:37.2px;top:484.8px;font-size:14.4px;line-height:19px;color:rgba(255,255,255,.82);transform:scaleX(0.9605);">Арбитраж</span>
<span id="t98" class="t " style="left:37.2px;top:540.8px;font-size:14.4px;line-height:19px;color:rgba(255,255,255,.82);transform:scaleX(0.9418);">Категории каталога</span>
<span id="t99" class="t " style="left:37.2px;top:596.5px;font-size:14.4px;line-height:19px;color:rgba(255,255,255,.82);transform:scaleX(0.9263);">Настройка FAQ</span>
<span id="t100" class="t " style="left:37.2px;top:684.5px;font-size:14.4px;line-height:19px;color:rgba(255,255,255,.82);transform:scaleX(0.9566);">Настройки</span>
<span id="t101" class="t " style="left:37.2px;top:740.9px;font-size:14.4px;line-height:19px;color:rgba(255,255,255,.82);transform:scaleX(0.9498);">Управление регионами</span>
<span id="t102" class="t " style="left:37.2px;top:796.9px;font-size:14.4px;line-height:19px;color:rgba(255,255,255,.82);transform:scaleX(0.9373);">Управление тарифами</span>
<span id="t103" class="t " style="left:37.2px;top:852.8px;font-size:14.4px;line-height:19px;color:rgba(255,255,255,.82);transform:scaleX(0.9490);">Управление баннерами</span>
<span id="t104" class="t " style="left:37.2px;top:372.8px;font-size:14.4px;line-height:19px;color:#fff;font-weight:700;transform:scaleX(0.9625);">Все проекты</span>
<div class="b" style="left:16px;top:632px;width:192px;height:1px;background:rgba(255,255,255,.18);"></div>
<span id="t105" class="t " style="left:16.3px;top:651.6px;font-size:10.4px;line-height:14px;color:rgba(255,255,255,.42);font-weight:700;transform:scaleX(0.9989);">РАЗНОЕ</span>
<div class="b" style="left:16px;top:889px;width:192px;height:1px;background:rgba(255,255,255,.18);"></div>
<div class="b" style="left:92px;top:906px;width:40px;height:40px;background:rgba(255,255,255,.2);border-radius:50%;"></div>
<svg style="left:107.5px;top:920px;" width="8" height="12" viewBox="0 0 8 12"><path d="M6.2 1.6 L2 6 L6.2 10.4" fill="none" stroke="rgba(255,255,255,.6)" stroke-width="2.4"/></svg>
<svg style="left:16.5px;top:206.5px;" width="16" height="16" viewBox="0 0 16 16"><g fill="rgba(255,255,255,.3)"><circle cx="8" cy="2.8" r="2.6"/><path d="M0.2 6.3 C2.5 6.3 5.6 7 7.4 8.2 V15.6 C5.6 14.4 2.5 13.7 0.2 13.7 Z"/><path d="M15.8 6.3 C13.5 6.3 10.4 7 8.6 8.2 V15.6 C10.4 14.4 13.5 13.7 15.8 13.7 Z"/></g></svg>
<svg style="left:16px;top:264px;" width="18" height="12" viewBox="0 0 18 12"><g fill="rgba(255,255,255,.3)"><path fill-rule="evenodd" d="M0.8 0.4 H17.2 A0.8 0.8 0 0 1 18 1.2 V10.8 A0.8 0.8 0 0 1 17.2 11.6 H0.8 A0.8 0.8 0 0 1 0 10.8 V1.2 A0.8 0.8 0 0 1 0.8 0.4 Z M3.6 2.2 A1.8 1.8 0 0 1 1.8 4 V8 A1.8 1.8 0 0 1 3.6 9.8 H14.4 A1.8 1.8 0 0 1 16.2 8 V4 A1.8 1.8 0 0 1 14.4 2.2 Z M9 3 A2.6 3 0 1 0 9 9 A2.6 3 0 1 0 9 3 Z"/></g></svg>
<svg style="left:16px;top:320px;" width="18" height="13" viewBox="0 0 18 13"><g fill="rgba(255,255,255,.3)"><circle cx="5.6" cy="3.4" r="3.2"/><path d="M0 12.6 V10.8 C0 8.8 1.6 7.4 3.6 7.4 H7.6 C9.6 7.4 11.2 8.8 11.2 10.8 V12.6 Z"/><circle cx="13" cy="4" r="2.7"/><path d="M12.4 12.6 V10.6 C12.4 9.4 12 8.4 11.2 7.6 H14.6 C16.4 7.6 18 8.8 18 10.8 V12.6 Z"/></g></svg>
<svg style="left:17px;top:376.2px;" width="15" height="11.4" viewBox="0 0 15 11.4"><g fill="#fff"><rect x="0" y="0" width="2.7" height="2.7" rx="0.5"/><rect x="0" y="4.35" width="2.7" height="2.7" rx="0.5"/><rect x="0" y="8.7" width="2.7" height="2.7" rx="0.5"/><rect x="4.4" y="0.4" width="10.6" height="1.9" rx="0.5"/><rect x="4.4" y="4.75" width="10.6" height="1.9" rx="0.5"/><rect x="4.4" y="9.1" width="10.6" height="1.9" rx="0.5"/></g></svg>
<svg style="left:17.5px;top:430px;" width="14" height="15.5" viewBox="0 0 14 15.5"><g fill="rgba(255,255,255,.3)"><path fill-rule="evenodd" d="M1.6 6.8 H12.4 A1.5 1.5 0 0 1 13.9 8.3 V14 A1.5 1.5 0 0 1 12.4 15.5 H1.6 A1.5 1.5 0 0 1 0.1 14 V8.3 A1.5 1.5 0 0 1 1.6 6.8 Z"/><path d="M2.4 7 V4.4 A4.2 4.2 0 0 1 10.6 3.6 L8.5 4.3 A2 2 0 0 0 4.6 4.6 V7 Z"/></g></svg>
<svg style="left:15.5px;top:486px;" width="20" height="15" viewBox="0 0 20 15"><g fill="rgba(255,255,255,.3)"><rect x="9" y="0.4" width="2" height="12.6"/><rect x="2.6" y="2.2" width="14.8" height="1.7"/><rect x="4.4" y="12.8" width="11.2" height="1.9" rx="0.5"/><circle cx="10" cy="2.6" r="2"/><path d="M3.7 3.6 L0.2 9.6 A3.6 2.6 0 0 0 7.2 9.6 Z M3.7 5.8 L5.4 9 H2 Z" fill-rule="evenodd"/><path d="M16.3 3.6 L12.8 9.6 A3.6 2.6 0 0 0 19.8 9.6 Z M16.3 5.8 L18 9 H14.6 Z" fill-rule="evenodd"/></g></svg>
<svg style="left:16px;top:543px;" width="17" height="13.5" viewBox="0 0 17 13.5"><g fill="rgba(255,255,255,.3)"><path fill-rule="evenodd" d="M1.4 0 H15.6 A1.4 1.4 0 0 1 17 1.4 V12.1 A1.4 1.4 0 0 1 15.6 13.5 H1.4 A1.4 1.4 0 0 1 0 12.1 V1.4 A1.4 1.4 0 0 1 1.4 0 Z M2.4 3.2 V4.6 H14.6 V3.2 Z M2.4 6.1 V7.5 H14.6 V6.1 Z M2.4 9 V10.4 H14.6 V9 Z"/></g></svg>
<svg style="left:17px;top:598.5px;" width="15" height="15" viewBox="0 0 15 15"><g fill="rgba(255,255,255,.3)"><path fill-rule="evenodd" d="M7.5 0 A7.5 7.5 0 1 0 7.5 15 A7.5 7.5 0 1 0 7.5 0 Z M4.6 5.4 C4.8 3.8 6 2.9 7.6 2.9 C9.3 2.9 10.5 3.9 10.5 5.3 C10.5 6.5 9.8 7 9.1 7.5 C8.6 7.9 8.4 8.1 8.4 8.8 V9.2 H6.5 V8.6 C6.5 7.5 7 7 7.6 6.6 C8.2 6.2 8.5 5.9 8.5 5.4 C8.5 4.9 8.1 4.6 7.5 4.6 C6.9 4.6 6.5 4.9 6.4 5.6 Z M6.4 10.2 H8.5 V12.2 H6.4 Z"/></g></svg>
<svg style="left:17px;top:686.5px;" width="15" height="15" viewBox="0 0 15 15"><g fill="rgba(255,255,255,.3)"><path fill-rule="evenodd" d="M6.2 0 H8.8 L9.2 2 L10.6 2.7 L12.4 1.7 L14.1 3.7 L13 5.3 L13.5 6.6 L15 7 V9 L13.3 9.4 L12.8 10.7 L13.8 12.4 L12 14 L10.5 12.9 L9.2 13.4 L8.8 15 H6.2 L5.8 13.4 L4.5 12.9 L3 14 L1.2 12.4 L2.2 10.7 L1.7 9.4 L0 9 V6.4 L1.7 6 L2.2 4.7 L1.2 3.1 L3 1.3 L4.5 2.4 L5.8 1.9 Z M7.5 5 A2.5 2.5 0 1 0 7.5 10 A2.5 2.5 0 1 0 7.5 5 Z"/></g></svg>
<svg style="left:16px;top:742px;" width="17.5" height="15.5" viewBox="0 0 17.5 15.5"><g fill="rgba(255,255,255,.3)"><path d="M0 6.4 L4 4.8 V14 L0 15.5 Z"/><path d="M5 10.2 L8.75 13.4 L12.5 10.2 V15.4 L5 13.2 Z"/><path d="M13.5 8 L17.5 6.4 V13.8 L13.5 15.4 Z"/><path fill-rule="evenodd" d="M8.75 0 A3.8 3.8 0 0 1 12.55 3.8 C12.55 5.6 10.6 8.2 8.75 10.2 C6.9 8.2 4.95 5.6 4.95 3.8 A3.8 3.8 0 0 1 8.75 0 Z M8.75 2.4 A1.4 1.4 0 1 0 8.75 5.2 A1.4 1.4 0 1 0 8.75 2.4 Z"/></g></svg>
<svg style="left:16.5px;top:798px;" width="16" height="15.5" viewBox="0 0 16 15.5"><g fill="rgba(255,255,255,.3)"><path fill-rule="evenodd" d="M8 0 A5.2 5.2 0 1 0 8 10.4 A5.2 5.2 0 1 0 8 0 Z M7.4 1.6 H8.6 V2.4 C9.6 2.5 10.2 3.1 10.3 4 H9 C8.9 3.6 8.6 3.4 8 3.4 C7.4 3.4 7.1 3.6 7.1 4 C7.1 4.4 7.4 4.5 8.3 4.7 C9.7 5 10.4 5.5 10.4 6.5 C10.4 7.5 9.7 8 8.6 8.2 V8.9 H7.4 V8.2 C6.3 8 5.6 7.4 5.6 6.4 H6.9 C7 6.9 7.3 7.2 8 7.2 C8.7 7.2 9 7 9 6.6 C9 6.2 8.8 6 7.8 5.8 C6.5 5.5 5.8 5.1 5.8 4.1 C5.8 3.2 6.4 2.6 7.4 2.4 Z"/><path d="M0 11.4 H2.6 C3.2 11.8 5 12.4 8 12.4 C11 12.4 12.8 11.8 13.4 11.4 H16 V15.5 H0 Z"/></g></svg>
<svg style="left:16.5px;top:855.5px;" width="16" height="12.5" viewBox="0 0 16 12.5"><g fill="rgba(255,255,255,.3)"><path fill-rule="evenodd" d="M1.4 0 H14.6 A1.4 1.4 0 0 1 16 1.4 V11.1 A1.4 1.4 0 0 1 14.6 12.5 H1.4 A1.4 1.4 0 0 1 0 11.1 V1.4 A1.4 1.4 0 0 1 1.4 0 Z M3.6 2 A1.5 1.5 0 1 0 3.6 5 A1.5 1.5 0 1 0 3.6 2 Z M2 10.4 H14 V6.6 L11 3.8 L6.6 8.2 L5 6.8 L2 9.6 Z"/></g></svg>
<div class="b" style="left:111px;top:454.4px;width:30px;height:18px;background:#e74a3b;border-radius:9px;"></div>
<span class="t" style="left:111px;top:454.4px;width:30px;height:18px;line-height:18.5px;text-align:center;color:#fff;font-size:11px;font-weight:700;">127</span>
<div class="b" style="left:145px;top:454.4px;width:30px;height:18px;background:#36b9cc;border-radius:9px;"></div>
<span class="t" style="left:145px;top:454.4px;width:30px;height:18px;line-height:18.5px;text-align:center;color:#fff;font-size:11px;font-weight:700;">299</span>
<div class="b" style="left:179px;top:454.4px;width:24px;height:18px;background:#f6c23e;border-radius:9px;"></div>
<span class="t" style="left:179px;top:454.4px;width:24px;height:18px;line-height:18.5px;text-align:center;color:#fff;font-size:11px;font-weight:700;">29</span>
<div class="b" style="left:185px;top:486px;width:18px;height:18.5px;background:#e74a3b;border-radius:9px;"></div>
<span class="t" style="left:185px;top:486px;width:18px;height:18.5px;line-height:19px;text-align:center;color:#fff;font-size:11px;font-weight:700;">5</span>
<div class="b" style="left:2.1px;top:356px;width:136.9px;height:46.9px;background:transparent;border:4px solid #ff5a47;box-shadow:2px 2px 2px rgba(0,8,50,.8), inset 2px 2px 2px rgba(0,8,50,.75);"></div>
<svg style="left:0;top:0;filter:drop-shadow(1.8px 2px 1.1px rgba(0,0,0,.9));" width="1920" height="1050"><path transform="translate(199.6 405.3) rotate(-29.6677)" d="M0 6.1 A6.1 6.1 0 0 1 0 -6.1 L50.6485 -4.7 L47.4485 -10.7 L64.4485 0 L47.4485 10.7 L50.6485 4.7 Z" fill="#ff5a4a"/></svg>
<svg style="left:0;top:0;filter:drop-shadow(1.8px 2px 1.1px rgba(0,0,0,.9));" width="1920" height="1050"><path transform="translate(644.8 421.6) rotate(-130.236)" d="M0 6.1 A6.1 6.1 0 0 1 0 -6.1 L44.0999 -4.7 L40.8999 -10.7 L57.8999 0 L40.8999 10.7 L44.0999 4.7 Z" fill="#ff5a4a"/></svg>
<div class="b" style="left:1126.5px;top:768.3px;width:57px;height:21.4px;background:#f9f9fb;border:1px solid #cfcfd8;border-radius:3.5px;"></div>
<span id="t106" class="t " style="left:1130px;top:772.3px;font-size:12px;line-height:16px;color:#15141a;transform:scaleX(1.0143);">Заказчик</span>
<svg style="left:1882px;top:371px;" width="12.4" height="9.6" viewBox="0 0 12.4 9.6"><path d="M5.4 0.6 L1.2 4.8 L5.4 9 M11.2 0.6 L7 4.8 L11.2 9" fill="none" stroke="#7b93e8" stroke-width="1.9"/></svg>
<div class="b" style="left:1877.5px;top:387.7px;width:26px;height:115.6px;background:#f7f7f9;border:1px solid #e6e6ec;border-right:none;border-radius:4px 0 0 4px;"></div>
<div class="b" style="left:1878.5px;top:415.9px;width:25px;height:1px;background:#e3e3e9;"></div>
<div class="b" style="left:1878.5px;top:444.8px;width:25px;height:1px;background:#e3e3e9;"></div>
<div class="b" style="left:1878.5px;top:473.8px;width:25px;height:1px;background:#e3e3e9;"></div>
<div class="b" style="left:1880.1px;top:397px;width:17.7px;height:11.8px;background:#e88680;border-radius:3.2px;"></div>
<svg style="left:1887.3px;top:400.9px;" width="3.6" height="4" viewBox="0 0 3.6 4"><path d="M0 0 L3.6 2 L0 4 Z" fill="#fff"/></svg>
<div class="b" style="left:1880.1px;top:426px;width:17.7px;height:11.8px;background:#e88680;border-radius:3.2px;"></div>
<svg style="left:1887.3px;top:429.9px;" width="3.6" height="4" viewBox="0 0 3.6 4"><path d="M0 0 L3.6 2 L0 4 Z" fill="#fff"/></svg>
<div class="b" style="left:1880.1px;top:455px;width:17.7px;height:11.8px;background:#e88680;border-radius:3.2px;"></div>
<svg style="left:1887.3px;top:458.9px;" width="3.6" height="4" viewBox="0 0 3.6 4"><path d="M0 0 L3.6 2 L0 4 Z" fill="#fff"/></svg>
<svg style="left:1884px;top:481.6px;" width="14" height="16.4" viewBox="0 0 14 16.4"><path d="M4.4 1.4 A1 1 0 0 1 6.4 1.4 V7.2 H6.8 V0.9 A1 1 0 0 1 8.8 0.9 V7.2 H9.2 V1.8 A1 1 0 0 1 11.2 1.8 V7.6 H11.6 V4 A1 1 0 0 1 13.6 4 V11.2 C13.6 14.2 11.6 16.4 8.6 16.4 H7.8 C5.8 16.4 4.6 15.6 3.6 14.2 L0.4 9.8 A1.15 1.15 0 0 1 2.2 8.4 L4 10.4 H4.4 Z" fill="#8a9be6"/></svg>
<div class="b" style="left:1903px;top:113px;width:17px;height:937px;background:#f1f1f1;"></div>
<div class="b" style="left:1903px;top:130px;width:17px;height:264.6px;background:#cdcdcd;"></div>
<svg style="left:1906.5px;top:118px;" width="10" height="7" viewBox="0 0 10 7"><path d="M1 6 L5 1.8 L9 6" fill="none" stroke="#505050" stroke-width="1.7"/></svg>
<svg style="left:1906.5px;top:1038px;" width="10" height="7" viewBox="0 0 10 7"><path d="M1 1 L5 5.2 L9 1" fill="none" stroke="#505050" stroke-width="1.7"/></svg>
<div class="b" style="left:0px;top:978px;width:1903px;height:72px;background:#f6c23e;"></div>
<span id="t107" class="t " style="left:29px;top:1004px;font-size:16px;line-height:21px;color:#000;transform:scaleX(0.9571);">Данный сайт использует куки для улучшения пользовательского интерфейса</span>
<span id="t108" class="t " style="left:586px;top:1004px;font-size:16px;line-height:21px;color:#2e2f38;transform:scaleX(0.9755);">Правила пользования</span>
<div class="b" style="left:1734px;top:994px;width:140px;height:40px;background:#e0e0e0;border-radius:4.5px;"></div>
<span id="t109" class="t " style="left:1776px;top:1004.4px;font-size:15px;line-height:20px;color:#000;font-weight:700;transform:scaleX(0.9751);">Хорошо</span>
<svg style="left:1809px;top:957px;filter:drop-shadow(0 3px 5px rgba(0,0,0,.22));" width="90" height="90" viewBox="-10 -10 90 90"><path d="M30 0 C52 0 60 8 60 29.5 C60 51 52 59 30 59 C8 59 0 51 0 29.5 C0 8 8 0 30 0 Z" fill="#4467e6"/><path d="M30 11.5 C43.5 11.5 48.5 16.5 48.5 30 C48.5 37 47.4 41.4 44.6 44 L44.9 48.6 L39.6 47 C37.1 47.9 34 48.3 30 48.3 C16.5 48.3 11.5 43.5 11.5 30 C11.5 16.5 16.5 11.5 30 11.5 Z" fill="#fff"/><circle cx="30" cy="24.6" r="3.1" fill="#4467e6"/><circle cx="30" cy="33.6" r="3.1" fill="#4467e6"/></svg>
<div class="b" style="left:1861px;top:964px;width:20px;height:20px;background:#e30613;border-radius:50%;"></div>
<svg style="left:1872px;top:980px;" width="8" height="6" viewBox="0 0 8 6"><path d="M0 0 L8 0 L1.5 5.5 Z" fill="#e30613"/></svg>
<span id="t110" class="t " style="left:1867.4px;top:966.3px;font-size:12px;line-height:16px;color:#fff;">8</span>
<div class="b" style="left:0px;top:0px;width:1920px;height:44px;background:#f0f0f4;"></div>
<div class="b" style="left:0px;top:44px;width:1920px;height:68px;background:#f9f9fb;"></div>
<div class="b" style="left:0px;top:112px;width:1920px;height:1px;background:#cfcfd4;"></div>
<svg style="left:11px;top:15px;" width="12" height="14" viewBox="0 0 12 14"><path d="M8.5 1.5 L2.5 7 L8.5 12.5" fill="none" stroke="#5b5b66" stroke-width="1.4" stroke-linecap="round" stroke-linejoin="round"/></svg>
<div class="b" style="left:32px;top:0px;width:1px;height:44px;background:linear-gradient(to right,rgba(0,0,0,.12),rgba(0,0,0,0));width:3px;"></div>
<div class="b" style="left:1556px;top:4px;width:72px;height:36px;background:#fff;border-radius:4px;box-shadow:0 0 2px rgba(0,0,0,.35);"></div>
<div class="b" style="left:45px;top:14px;width:16px;height:16px;background:#3f6ae8;"></div>
<svg style="left:47px;top:16px;" width="12" height="12" viewBox="0 0 12 12"><path d="M1.5 10.5 L6.3 5.7" stroke="#fff" stroke-width="2.2" stroke-linecap="round"/><path d="M8.6 1 A3 3 0 1 0 11 3.6 L9.2 5.2 L7 4.8 L6.8 2.8 Z" fill="#fff"/></svg>
<span class="t fade" style="left:67px;top:14px;width:36px;font-size:12.7px;line-height:18px;color:#15141a;letter-spacing:-0.2px">Приве</span>
<span class="t fade" style="left:120px;top:14px;width:56px;font-size:12.7px;line-height:18px;color:#15141a;letter-spacing:-0.2px">movemen</span>
<span class="t fade" style="left:197px;top:14px;width:56px;font-size:12.7px;line-height:18px;color:#15141a;letter-spacing:-0.2px">Title 1</span>
<div class="b" style="left:272px;top:14px;width:16px;height:16px;background:#fdfdff;border:1px solid #e4e4ee;"></div>
<span id="t111" class="t " style="left:273.5px;top:16px;font-size:9px;line-height:12px;color:#5b7be0;font-weight:700;letter-spacing:-0.3px;">FS</span>
<span class="t fade" style="left:294px;top:14px;width:36px;font-size:12.7px;line-height:18px;color:#15141a;letter-spacing:-0.2px">Табли</span>
<div class="b" style="left:348px;top:14px;width:16px;height:16px;background:#fdfdff;border:1px solid #e4e4ee;"></div>
<span id="t112" class="t " style="left:349.5px;top:16px;font-size:9px;line-height:12px;color:#5b7be0;font-weight:700;letter-spacing:-0.3px;">FS</span>
<span class="t fade" style="left:370px;top:14px;width:36px;font-size:12.7px;line-height:18px;color:#15141a;letter-spacing:-0.2px">Табли</span>
<div class="b" style="left:424px;top:14px;width:16px;height:16px;background:#fff;"></div>
<span id="t113" class="t " style="left:424.5px;top:15px;font-size:11px;line-height:14px;color:#b01030;letter-spacing:-0.6px;">AU</span>
<span class="t fade" style="left:446px;top:14px;width:36px;font-size:12.7px;line-height:18px;color:#15141a;letter-spacing:-0.2px">Редак</span>
<div class="b" style="left:500px;top:14px;width:16px;height:16px;background:#fdfdff;border:1px solid #e4e4ee;"></div>
<span id="t114" class="t " style="left:501.5px;top:16px;font-size:9px;line-height:12px;color:#5b7be0;font-weight:700;letter-spacing:-0.3px;">FS</span>
<span class="t fade" style="left:522px;top:14px;width:36px;font-size:12.7px;line-height:18px;color:#15141a;letter-spacing:-0.2px">Подар</span>
<svg style="left:576px;top:15px;" width="16" height="14" viewBox="0 0 16 14"><path d="M1 1.5 L5 5 L5 12.5 L1 9 Z" fill="#35b386"/><path d="M15 1.5 L11 5 L11 12.5 L15 9 Z" fill="#35b386"/><path d="M5 5 L8 8 L11 5 L11 8.5 L8 11.5 L5 8.5 Z" fill="#2a9470"/></svg>
<span class="t fade" style="left:598px;top:14px;width:36px;font-size:12.7px;line-height:18px;color:#15141a;letter-spacing:-0.2px">videos</span>
<svg style="left:652px;top:15px;" width="16" height="14" viewBox="0 0 16 14"><path d="M1 1.5 L5 5 L5 12.5 L1 9 Z" fill="#35b386"/><path d="M15 1.5 L11 5 L11 12.5 L15 9 Z" fill="#35b386"/><path d="M5 5 L8 8 L11 5 L11 8.5 L8 11.5 L5 8.5 Z" fill="#2a9470"/></svg>
<span class="t fade" style="left:674px;top:14px;width:36px;font-size:12.7px;line-height:18px;color:#15141a;letter-spacing:-0.2px">Польз</span>
<svg style="left:728px;top:15px;" width="16" height="14" viewBox="0 0 16 14"><path d="M1 1.5 L5 5 L5 12.5 L1 9 Z" fill="#35b386"/><path d="M15 1.5 L11 5 L11 12.5 L15 9 Z" fill="#35b386"/><path d="M5 5 L8 8 L11 5 L11 8.5 L8 11.5 L5 8.5 Z" fill="#2a9470"/></svg>
<span class="t fade" style="left:750px;top:14px;width:36px;font-size:12.7px;line-height:18px;color:#15141a;letter-spacing:-0.2px">Типы</span>
<div class="b" style="left:804px;top:14px;width:16px;height:16px;background:#4a6ee0;border-radius:2px;"></div>
<svg style="left:807px;top:17px;" width="10" height="10" viewBox="0 0 10 10"><path d="M1 3.5 H9 V9 H1 Z" fill="#fff"/><path d="M3.2 4.5 V2.6 A1.8 1.8 0 0 1 6.8 2.6 V4.5" fill="none" stroke="#fff" stroke-width="1.1"/></svg>
<span class="t fade" style="left:826px;top:14px;width:36px;font-size:12.7px;line-height:18px;color:#15141a;letter-spacing:-0.2px">База з</span>
<div class="b" style="left:880px;top:14px;width:16px;height:16px;background:#4a6ee0;border-radius:2px;"></div>
<svg style="left:883px;top:17px;" width="10" height="10" viewBox="0 0 10 10"><path d="M1 3.5 H9 V9 H1 Z" fill="#fff"/><path d="M3.2 4.5 V2.6 A1.8 1.8 0 0 1 6.8 2.6 V4.5" fill="none" stroke="#fff" stroke-width="1.1"/></svg>
<span class="t fade" style="left:902px;top:14px;width:36px;font-size:12.7px;line-height:18px;color:#15141a;letter-spacing:-0.2px">Панел</span>
<div class="b" style="left:956px;top:14px;width:16px;height:16px;background:#fdfdff;border:1px solid #e4e4ee;"></div>
<span id="t115" class="t " style="left:957.5px;top:16px;font-size:9px;line-height:12px;color:#5b7be0;font-weight:700;letter-spacing:-0.3px;">FS</span>
<span class="t fade" style="left:978px;top:14px;width:36px;font-size:12.7px;line-height:18px;color:#15141a;letter-spacing:-0.2px">HOWT</span>
<div class="b" style="left:1032px;top:14px;width:16px;height:16px;background:#fdfdff;border:1px solid #e4e4ee;"></div>
<span id="t116" class="t " style="left:1033.5px;top:16px;font-size:9px;line-height:12px;color:#5b7be0;font-weight:700;letter-spacing:-0.3px;">FS</span>
<span class="t fade" style="left:1054px;top:14px;width:36px;font-size:12.7px;line-height:18px;color:#15141a;letter-spacing:-0.2px">Приве</span>
<svg style="left:1108px;top:16px;" width="16" height="12" viewBox="0 0 16 12"><rect x="0" y="0" width="16" height="11.5" rx="3" fill="#f00"/><path d="M6.3 3 L10.6 5.75 L6.3 8.5 Z" fill="#fff"/></svg>
<span class="t fade" style="left:1130px;top:14px;width:36px;font-size:12.7px;line-height:18px;color:#15141a;letter-spacing:-0.2px">#falco</span>
<div class="b" style="left:1184px;top:14px;width:16px;height:16px;background:#fff;"></div>
<span id="t117" class="t " style="left:1184.5px;top:15px;font-size:11px;line-height:14px;color:#b01030;letter-spacing:-0.6px;">AU</span>
<span class="t fade" style="left:1206px;top:14px;width:36px;font-size:12.7px;line-height:18px;color:#15141a;letter-spacing:-0.2px">Управ</span>
<svg style="left:1260px;top:14px;" width="16" height="16" viewBox="0 0 16 16"><circle cx="8" cy="8" r="5.5" fill="none" stroke="#e6e6ec" stroke-width="2" stroke-dasharray="2 1.5"/></svg>
<span class="t fade" style="left:1282px;top:14px;width:36px;font-size:12.7px;line-height:18px;color:#15141a;letter-spacing:-0.2px">Заказ</span>
<div class="b" style="left:1336px;top:14px;width:16px;height:16px;background:#fdfdff;border:1px solid #e4e4ee;"></div>
<span id="t118" class="t " style="left:1337.5px;top:16px;font-size:9px;line-height:12px;color:#5b7be0;font-weight:700;letter-spacing:-0.3px;">FS</span>
<span class="t fade" style="left:1358px;top:14px;width:36px;font-size:12.7px;line-height:18px;color:#15141a;letter-spacing:-0.2px">Мой б</span>
<div class="b" style="left:1412px;top:14px;width:16px;height:16px;background:#fdfdff;border:1px solid #e4e4ee;"></div>
<span id="t119" class="t " style="left:1413.5px;top:16px;font-size:9px;line-height:12px;color:#5b7be0;font-weight:700;letter-spacing:-0.3px;">FS</span>
<span class="t fade" style="left:1434px;top:14px;width:36px;font-size:12.7px;line-height:18px;color:#15141a;letter-spacing:-0.2px">Введе</span>
<div class="b" style="left:1488px;top:14px;width:16px;height:16px;background:#fff;"></div>
<span id="t120" class="t " style="left:1488.5px;top:15px;font-size:11px;line-height:14px;color:#b01030;letter-spacing:-0.6px;">AU</span>
<span class="t fade" style="left:1510px;top:14px;width:36px;font-size:12.7px;line-height:18px;color:#15141a;letter-spacing:-0.2px">Дашб</span>
<div class="b" style="left:1563px;top:14px;width:16px;height:16px;background:#fff;"></div>
<span id="t121" class="t " style="left:1563.5px;top:15px;font-size:11px;line-height:14px;color:#b01030;letter-spacing:-0.6px;">AU</span>
<span class="t fade" style="left:1586px;top:14px;width:17px;font-size:12.7px;line-height:18px;color:#15141a;letter-spacing:-0.2px">Все</span>
<svg style="left:1607px;top:17px;" width="10" height="10" viewBox="0 0 10 10"><path d="M1 1 L9 9 M9 1 L1 9" fill="none" stroke="#15141a" stroke-width="1.3" stroke-linecap="round"/></svg>
<svg style="left:1641px;top:15px;" width="8" height="14" viewBox="0 0 8 14"><path d="M1.5 1.5 L6.5 7 L1.5 12.5" fill="none" stroke="#c4c4cc" stroke-width="1.4" stroke-linecap="round" stroke-linejoin="round"/></svg>
<svg style="left:1676px;top:16px;" width="12" height="12" viewBox="0 0 12 12"><path d="M6 0.5 V11.5 M0.5 6 H11.5" stroke="#2b2a33" stroke-width="1.1" stroke-linecap="round"/></svg>
<svg style="left:1715px;top:18px;" width="13" height="8" viewBox="0 0 13 8"><path d="M1 1 L6.5 6.5 L12 1" fill="none" stroke="#2b2a33" stroke-width="1.15" stroke-linecap="round" stroke-linejoin="round"/></svg>
<div class="b" style="left:1799px;top:21px;width:11px;height:1px;background:#111;"></div>
<div class="b" style="left:1846px;top:18px;width:8px;height:8px;background:transparent;border:1px solid #111;"></div>
<div class="b" style="left:1848px;top:16px;width:8px;height:8px;background:transparent;border:1px solid #111;border-left-color:transparent;border-bottom-color:transparent;"></div>
<svg style="left:1891px;top:16px;" width="11" height="11" viewBox="0 0 11 11"><path d="M1 1 L10.5 10.5 M10 1 L1 10.5" fill="none" stroke="#111" stroke-width="1.1" stroke-linecap="round"/></svg>
<svg style="left:16px;top:57px;" width="16" height="14" viewBox="0 0 16 14"><path d="M15 7 H1.5 M7 1.5 L1.5 7 L7 12.5" fill="none" stroke="#4d4d57" stroke-width="1.25" stroke-linecap="round" stroke-linejoin="round"/></svg>
<svg style="left:52px;top:57px;" width="16" height="14" viewBox="0 0 16 14"><path d="M1 7 H14.5 M9 1.5 L14.5 7 L9 12.5" fill="none" stroke="#b9b9c0" stroke-width="1.25" stroke-linecap="round" stroke-linejoin="round"/></svg>
<svg style="left:88px;top:56px;" width="16" height="16" viewBox="0 0 16 16"><path d="M13.8 8 A5.9 5.9 0 1 1 11.6 3.4" fill="none" stroke="#4d4d57" stroke-width="1.25" stroke-linecap="round" stroke-linejoin="round"/><path d="M9.2 1.2 H13.6 V5.6 Z" fill="#4d4d57" stroke="#4d4d57" stroke-width="1" stroke-linejoin="round"/></svg>
<div class="b" style="left:231px;top:49px;width:1422px;height:31px;background:#f0f0f4;border-radius:4px;"></div>
<svg style="left:240px;top:56px;" width="15" height="17" viewBox="0 0 15 17"><path d="M7.5 1 C5.5 2.6 3.3 3.1 1.2 3.1 V8 C1.2 12 4 14.8 7.5 16 C11 14.8 13.8 12 13.8 8 V3.1 C11.7 3.1 9.5 2.6 7.5 1 Z" fill="none" stroke="#4d4d57" stroke-width="1.25" stroke-linecap="round" stroke-linejoin="round"/></svg>
<svg style="left:269px;top:56px;" width="12" height="16" viewBox="0 0 12 16"><rect x="1" y="7" width="10" height="8" rx="1.6" fill="none" stroke="#4d4d57" stroke-width="1.25" stroke-linecap="round" stroke-linejoin="round"/><path d="M3.2 7 V4.4 A2.8 2.8 0 0 1 8.8 4.4 V7" fill="none" stroke="#4d4d57" stroke-width="1.25" stroke-linecap="round" stroke-linejoin="round"/></svg>
<svg style="left:296px;top:57px;" width="15" height="14" viewBox="0 0 15 14"><path d="M2.2 1 H12.8 A1.4 1.4 0 0 1 14.2 2.4 V8.4 A1.4 1.4 0 0 1 12.8 9.8 H9.6 L7.2 12.6 V9.8 H2.2 A1.4 1.4 0 0 1 0.8 8.4 V2.4 A1.4 1.4 0 0 1 2.2 1 Z M4 4.2 H11 M4 6.6 H9" fill="none" stroke="#4d4d57" stroke-width="1.25" stroke-linecap="round" stroke-linejoin="round"/></svg>
<span id="t122" class="t " style="left:321px;top:56px;font-size:14px;line-height:18px;color:#75747d;transform:scaleX(1.0213);">https://auction.</span>
<span id="t123" class="t " style="left:414px;top:56px;font-size:14px;line-height:18px;color:#15141a;transform:scaleX(1.0263);">web-automation.ru</span>
<span id="t124" class="t " style="left:533px;top:56px;font-size:14px;line-height:18px;color:#75747d;transform:scaleX(0.9783);">/auprojects</span>
<svg style="left:1628px;top:55px;" width="18" height="18" viewBox="0 0 18 18"><path d="M9 1.6 L11.2 6.4 L16.4 7 L12.6 10.6 L13.6 15.8 L9 13.2 L4.4 15.8 L5.4 10.6 L1.6 7 L6.8 6.4 Z" fill="none" stroke="#4d4d57" stroke-width="1.25" stroke-linecap="round" stroke-linejoin="round"/></svg>
<svg style="left:1780px;top:57px;" width="16" height="14" viewBox="0 0 16 14"><path d="M2.6 1 H13.4 A1.6 1.6 0 0 1 15 2.6 V6.2 A7 7 0 0 1 1 6.2 V2.6 A1.6 1.6 0 0 1 2.6 1 Z M4.8 5 L8 8.2 L11.2 5" fill="none" stroke="#4d4d57" stroke-width="1.25" stroke-linecap="round" stroke-linejoin="round"/></svg>
<div class="b" style="left:1815.5px;top:56px;width:16.5px;height:16.5px;background:#4a4a55;border-radius:50%;"></div>
<span id="t125" class="t " style="left:1820.5px;top:58px;font-size:10px;line-height:13px;color:#fff;font-weight:700;">E</span>
<div class="b" style="left:1851px;top:56px;width:17px;height:17px;background:#d4d4da;border-radius:50%;"></div>
<span id="t126" class="t " style="left:1853.5px;top:57.5px;font-size:10px;line-height:13px;color:#55555f;font-weight:700;letter-spacing:-0.3px">IP</span>
<svg style="left:1863px;top:66px;" width="7" height="7" viewBox="0 0 7 7"><circle cx="2.5" cy="2.5" r="1.8" fill="none" stroke="#4d4d57" stroke-width="1"/><path d="M4 4 L6.4 6.4" stroke="#4d4d57" stroke-width="1.2"/></svg>
<svg style="left:1889px;top:58px;" width="14" height="12" viewBox="0 0 14 12"><path d="M1 1.5 H13 M1 6 H13 M1 10.5 H13" stroke="#4d4d57" stroke-width="1.3" stroke-linecap="round"/></svg>
<svg style="left:12px;top:91px;" width="15" height="15" viewBox="0 0 15 15"><circle cx="7.5" cy="7.5" r="7" fill="#ff8a16"/><circle cx="7.8" cy="8" r="4.2" fill="#7542e5"/><path d="M1 6 C1.5 2.5 4.5 0.5 7.5 0.6 C5 2 5 4 6.5 5 C4 5 3.5 8 5.5 10 C7.5 12 11 11 12 8.5 C12.8 11.5 10 14.4 7.2 14.4 C3 14.4 0.4 10.5 1 6 Z" fill="#ff4f2e"/><path d="M3 3 C4.5 1.2 7 0.6 9 1 C7.5 1.6 7 2.6 7.4 3.4 Z" fill="#ffd43b"/></svg>
<span id="t127" class="t " style="left:32px;top:91px;font-size:12.5px;line-height:16px;color:#15141a;transform:scaleX(0.9425);">Начальная страница</span>
<svg style="left:159px;top:91px;" width="15" height="15" viewBox="0 0 15 15"><g fill="none" stroke="#4a4a55" stroke-width="1.1"><circle cx="7.5" cy="7.5" r="6.5"/><ellipse cx="7.5" cy="7.5" rx="2.9" ry="6.5"/><path d="M1 7.5 H14 M7.5 1 V14"/></g></svg>
<span id="t128" class="t " style="left:178px;top:91px;font-size:12.5px;line-height:16px;color:#15141a;transform:scaleX(0.9496);">Авиабилеты</span>
<svg style="left:259px;top:91px;" width="15" height="15" viewBox="0 0 15 15"><g fill="none" stroke="#4a4a55" stroke-width="1.1"><circle cx="7.5" cy="7.5" r="6.5"/><ellipse cx="7.5" cy="7.5" rx="2.9" ry="6.5"/><path d="M1 7.5 H14 M7.5 1 V14"/></g></svg>
<span id="t129" class="t " style="left:278px;top:91px;font-size:12.5px;line-height:16px;color:#15141a;transform:scaleX(0.9038);">Яндекс</span>
<svg style="left:1798px;top:92px;" width="15" height="13" viewBox="0 0 15 13"><path d="M1 2.2 A1.2 1.2 0 0 1 2.2 1 H5.4 L7 2.8 H12.8 A1.2 1.2 0 0 1 14 4 V10.8 A1.2 1.2 0 0 1 12.8 12 H2.2 A1.2 1.2 0 0 1 1 10.8 Z" fill="none" stroke="#4d4d57" stroke-width="1.2" stroke-linejoin="round"/></svg>
<span id="t130" class="t " style="left:1817px;top:91px;font-size:12.5px;line-height:16px;color:#15141a;transform:scaleX(0.9501);">Другие закладки</span>
</body></html>
